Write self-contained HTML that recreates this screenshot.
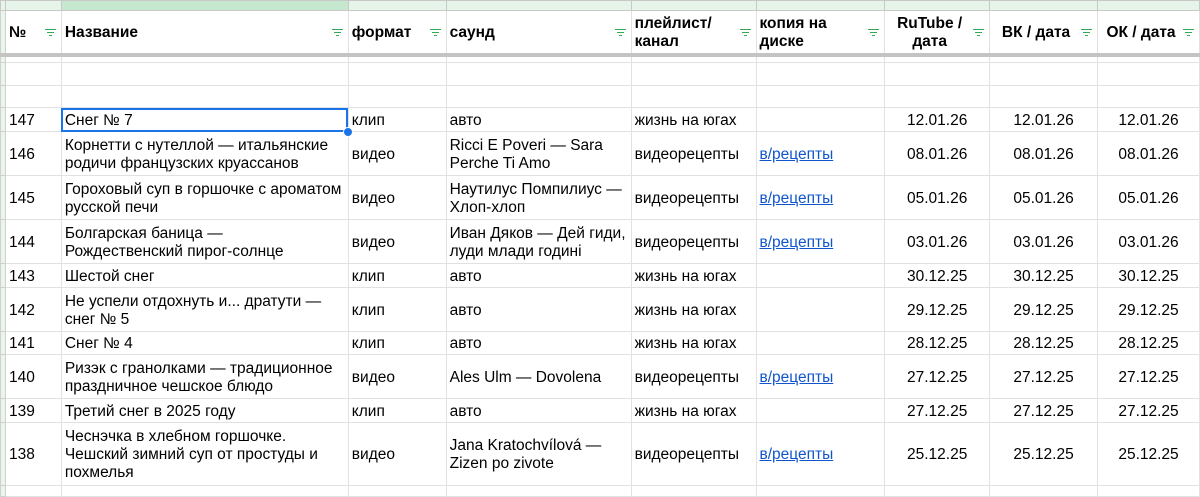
<!DOCTYPE html>
<html><head><meta charset="utf-8"><style>
body{margin:0;width:1200px;height:489px;overflow:hidden;background:#fff;font-family:"Liberation Sans",Arial,sans-serif;font-size:15.5px;color:#000;position:relative}
table{border-collapse:collapse;table-layout:fixed;position:absolute;left:0;top:0}
td{border:1px solid #e1e1e1;padding:2px 3px 0;vertical-align:middle;line-height:18px;overflow:hidden;white-space:nowrap;position:relative}
td.s{padding:0;background:#eaf5ec;border-color:#d0d0d0}
tr.top td{height:9px;background:#e6f4ea;border-color:#c8c8c8;padding:0}
tr.top td.g{background:#c6e8cf}
tr.h td{height:40px;font-weight:bold;border-bottom:4px solid #c4c4c4}
.f{position:absolute;right:5px;top:50%;margin-top:-3px;width:11px;height:8px}
.f i{display:block;height:1px;background:#34a853;margin:0 auto 2px}
.c{text-align:center}
a{color:#1155cc;text-decoration:underline}
.sel{outline:2px solid #1a73e8;outline-offset:-2px}
.dot{position:absolute;left:343px;top:127px;width:8px;height:8px;border-radius:50%;background:#1a73e8;border:1px solid #fff}
tr.e td{padding:0}
</style></head><body>
<table>
<colgroup><col style="width:5px"><col style="width:56px"><col style="width:287px"><col style="width:98px"><col style="width:185px"><col style="width:125px"><col style="width:129px"><col style="width:105px"><col style="width:108px"><col style="width:102px"></colgroup>
<tr class="top"><td class="s"></td><td></td><td class="g"></td><td></td><td></td><td></td><td></td><td></td><td></td><td></td></tr>
<tr class="h"><td class="s"></td><td>№<span class="f"><i style="width:11px"></i><i style="width:7px"></i><i style="width:3px"></i></span></td>
<td>Название<span class="f"><i style="width:11px"></i><i style="width:7px"></i><i style="width:3px"></i></span></td>
<td>формат<span class="f"><i style="width:11px"></i><i style="width:7px"></i><i style="width:3px"></i></span></td>
<td>саунд<span class="f"><i style="width:11px"></i><i style="width:7px"></i><i style="width:3px"></i></span></td>
<td>плейлист/<br>канал<span class="f"><i style="width:11px"></i><i style="width:7px"></i><i style="width:3px"></i></span></td>
<td>копия на<br>диске<span class="f"><i style="width:11px"></i><i style="width:7px"></i><i style="width:3px"></i></span></td>
<td class="c" style="padding-right:18px">RuTube /<br>дата<span class="f"><i style="width:11px"></i><i style="width:7px"></i><i style="width:3px"></i></span></td>
<td class="c" style="padding-right:18px">ВК / дата<span class="f"><i style="width:11px"></i><i style="width:7px"></i><i style="width:3px"></i></span></td>
<td class="c" style="padding-right:18px">ОК / дата<span class="f"><i style="width:11px"></i><i style="width:7px"></i><i style="width:3px"></i></span></td></tr>
<tr class="e"><td class="s" style="height:5px"></td><td></td><td></td><td></td><td></td><td></td><td></td><td></td><td></td><td></td></tr>
<tr><td class="s" style="height:22px"></td><td></td><td></td><td></td><td></td><td></td><td></td><td></td><td></td><td></td></tr>
<tr><td class="s" style="height:21px"></td><td></td><td></td><td></td><td></td><td></td><td></td><td></td><td></td><td></td></tr>
<tr><td class="s" style="height:23px"></td><td>147</td><td class="sel">Снег № 7</td><td>клип</td><td>авто</td><td>жизнь на югах</td><td></td><td class="c">12.01.26</td><td class="c">12.01.26</td><td class="c">12.01.26</td></tr>
<tr><td class="s" style="height:43px"></td><td>146</td><td>Корнетти с нутеллой — итальянские<br>родичи французских круассанов</td><td>видео</td><td>Ricci E Poveri — Sara<br>Perche Ti Amo</td><td>видеорецепты</td><td><a>в/рецепты</a></td><td class="c">08.01.26</td><td class="c">08.01.26</td><td class="c">08.01.26</td></tr>
<tr><td class="s" style="height:43px"></td><td>145</td><td>Гороховый суп в горшочке с ароматом<br>русской печи</td><td>видео</td><td>Наутилус Помпилиус —<br>Хлоп-хлоп</td><td>видеорецепты</td><td><a>в/рецепты</a></td><td class="c">05.01.26</td><td class="c">05.01.26</td><td class="c">05.01.26</td></tr>
<tr><td class="s" style="height:43px"></td><td>144</td><td>Болгарская баница —<br>Рождественский пирог-солнце</td><td>видео</td><td>Иван Дяков — Дей гиди,<br>луди млади годині</td><td>видеорецепты</td><td><a>в/рецепты</a></td><td class="c">03.01.26</td><td class="c">03.01.26</td><td class="c">03.01.26</td></tr>
<tr><td class="s" style="height:23px"></td><td>143</td><td>Шестой снег</td><td>клип</td><td>авто</td><td>жизнь на югах</td><td></td><td class="c">30.12.25</td><td class="c">30.12.25</td><td class="c">30.12.25</td></tr>
<tr><td class="s" style="height:43px"></td><td>142</td><td>Не успели отдохнуть и... дратути —<br>снег № 5</td><td>клип</td><td>авто</td><td>жизнь на югах</td><td></td><td class="c">29.12.25</td><td class="c">29.12.25</td><td class="c">29.12.25</td></tr>
<tr><td class="s" style="height:22px"></td><td>141</td><td>Снег № 4</td><td>клип</td><td>авто</td><td>жизнь на югах</td><td></td><td class="c">28.12.25</td><td class="c">28.12.25</td><td class="c">28.12.25</td></tr>
<tr><td class="s" style="height:43px"></td><td>140</td><td>Ризэк с гранолками — традиционное<br>праздничное чешское блюдо</td><td>видео</td><td>Ales Ulm — Dovolena</td><td>видеорецепты</td><td><a>в/рецепты</a></td><td class="c">27.12.25</td><td class="c">27.12.25</td><td class="c">27.12.25</td></tr>
<tr><td class="s" style="height:23px"></td><td>139</td><td>Третий снег в 2025 году</td><td>клип</td><td>авто</td><td>жизнь на югах</td><td></td><td class="c">27.12.25</td><td class="c">27.12.25</td><td class="c">27.12.25</td></tr>
<tr><td class="s" style="height:62px"></td><td>138</td><td>Чеснэчка в хлебном горшочке.<br>Чешский зимний суп от простуды и<br>похмелья</td><td>видео</td><td>Jana Kratochvílová —<br>Zizen po zivote</td><td>видеорецепты</td><td><a>в/рецепты</a></td><td class="c">25.12.25</td><td class="c">25.12.25</td><td class="c">25.12.25</td></tr>
<tr><td class="s" style="height:10px"></td><td></td><td></td><td></td><td></td><td></td><td></td><td></td><td></td><td></td></tr>
</table>
<div class="dot"></div>
</body></html>
